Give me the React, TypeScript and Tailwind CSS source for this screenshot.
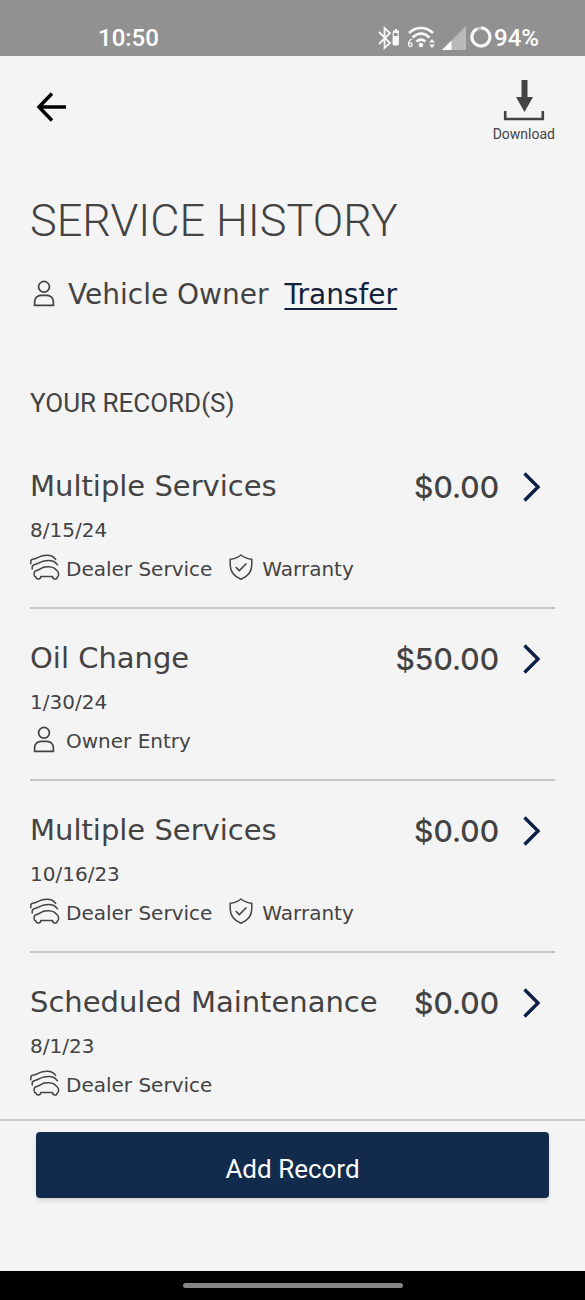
import type { ReactNode } from "react";

type Source = "dealer" | "owner" | "warranty";

interface ServiceRecord {
  title: string;
  date: string;
  price: string;
  tags: Source[];
}

const records: ServiceRecord[] = [
  { title: "Multiple Services", date: "8/15/24", price: "$0.00", tags: ["dealer", "warranty"] },
  { title: "Oil Change", date: "1/30/24", price: "$50.00", tags: ["owner"] },
  { title: "Multiple Services", date: "10/16/23", price: "$0.00", tags: ["dealer", "warranty"] },
  { title: "Scheduled Maintenance", date: "8/1/23", price: "$0.00", tags: ["dealer"] },
];

function PersonIcon() {
  return (
    <svg className="h-[30px] w-[30px] shrink-0" viewBox="0 0 30 30" fill="none" stroke="currentColor" strokeWidth="1.7" aria-hidden="true">
      <circle cx="14" cy="6.8" r="5.4" />
      <path d="M4.6 25.4V22C4.6 18 7.5 15.4 11 15.4H17C20.5 15.4 23.4 18 23.4 22V25.4Z" />
    </svg>
  );
}

function CarsIcon() {
  return (
    <svg className="h-[30px] w-[30px] shrink-0" viewBox="0 0 30 30" fill="none" stroke="currentColor" strokeWidth="1.5" strokeLinecap="round" strokeLinejoin="round" aria-hidden="true">
      <path d="M.8 9.7V7.4C.8 5.9 2 5.4 3.6 5.1C7.5 4.5 8.6 2.6 12.5 1.8C16 1.2 20 1.3 22 2.2C23.8 3 24.8 4 25.6 5.4" />
      <path d="M2.2 15V13C2.2 11.4 3.4 10.8 4.9 10.5C8.9 9.8 10.2 7.7 14 7C17.5 6.3 21.5 6.4 23.8 7.5C25.6 8.4 26.5 9.5 27.4 10.8" />
      <path d="M6.1 23.2C4.6 22.8 4.1 21.9 4.1 20.5V19.2C4.1 17.6 5.2 16.8 6.7 16.5C10.3 15.8 11.3 13.8 14.5 13.1C18 12.4 22 12.6 24.2 14.1C25.7 15.2 26.2 16 27.3 17C29 18.6 28.9 21.3 27.9 22.6L27.2 23.1C27.2 25.7 22.8 25.7 22.5 22.6H10.8C10.5 25.7 6.3 25.7 6.1 23.2Z" />
    </svg>
  );
}

function ShieldIcon() {
  return (
    <svg className="h-[30px] w-[30px] shrink-0" viewBox="0 0 30 30" fill="none" stroke="currentColor" strokeWidth="1.5" strokeLinejoin="round" aria-hidden="true">
      <path d="M15 1C12 3.5 8 5 4.2 5.2V11C4.2 18 9 22.7 15 25.3C21 22.7 25.8 18 25.8 11V5.2C22 5 18 3.5 15 1Z" />
      <path d="M9.7 13L13.3 16.6L20.4 9.5" />
    </svg>
  );
}

const tagInfo: Record<Source, { label: string; icon: ReactNode }> = {
  dealer: { label: "Dealer Service", icon: <CarsIcon /> },
  owner: { label: "Owner Entry", icon: <PersonIcon /> },
  warranty: { label: "Warranty", icon: <ShieldIcon /> },
};

function StatusBar() {
  return (
    <div className="flex h-14 items-center justify-between bg-[#919191] pt-5 pr-[46px] pl-[98px] font-['Roboto',sans-serif] text-2xl font-medium text-white">
      <span>10:50</span>
      <div className="flex items-center">
        <svg className="h-7 w-[93px]" viewBox="0 0 93 28" fill="none" stroke="#f8f8f8" aria-hidden="true">
          <path d="M2 8L13 19L7.5 24V4L13 9L2 20" strokeWidth="1.8" />
          <path d="M16 9V6.5H18V5H20V6.5H22V9Z" fill="#f8f8f8" stroke="none" />
          <rect x="16.2" y="8" width="5" height="13" rx="1" strokeWidth="1.2" />
          <rect x="16" y="12" width="5.5" height="9" fill="#f8f8f8" stroke="none" />
          <path d="M32 9C39 2.2 49 2.2 56 9M35.5 13.5C41 8.5 47 8.5 52.5 13.5M39.5 17.5C42.5 15 45.5 15 48.5 17.5" strokeWidth="2.5" />
          <circle cx="44" cy="21" r="2.3" fill="#f8f8f8" stroke="none" />
          <path d="M35 15C32 16 31.5 18 31.5 20.5" strokeWidth="1.3" />
          <circle cx="33.3" cy="20.7" r="1.8" strokeWidth="1.3" />
          <path d="M52 18.5L55 15L58 18.5ZM52 20.5L55 24L58 20.5Z" fill="#f8f8f8" stroke="none" />
          <path d="M65 26L89 2V26Z" fill="#bababa" stroke="none" />
          <path d="M65 26L74.5 16.5V26Z" fill="#fff" stroke="none" />
        </svg>
        <svg className="h-6 w-6" viewBox="0 0 24 24" fill="none" strokeWidth="3" aria-hidden="true">
          <circle cx="11" cy="11" r="9" stroke="#c2c2c2" />
          <path d="M11 2A9 9 0 1 1 7.2 2.8" stroke="#f8f8f8" />
        </svg>
        <span>94%</span>
      </div>
    </div>
  );
}

function RecordRow({ record }: { record: ServiceRecord }) {
  return (
    <li className="border-b-2 border-[#c6c6c6] pt-[30px] pb-[22px] last:border-b-0 last:pb-4">
      <a href="#record" className="block">
        <div className="flex h-10 items-center justify-between">
          <h3 className="text-[29px] whitespace-nowrap">{record.title}</h3>
          <div className="flex items-center gap-[22px] pr-[14px]">
            <span className="font-['Inter',sans-serif] text-[30px] leading-8 font-medium">{record.price}</span>
            <svg className="h-8 w-5" viewBox="0 0 20 32" fill="none" stroke="#0c1f45" strokeWidth="3.4" aria-hidden="true">
              <path d="M3.5 2.5L17 16L3.5 29.5" />
            </svg>
          </div>
        </div>
        <p className="text-[20px] leading-[46px]">{record.date}</p>
        <div className="flex h-8 items-center gap-[14px]">
          {record.tags.map((tag) => (
            <span key={tag} className="flex items-center gap-[6px] text-[20px]">
              {tagInfo[tag].icon}
              {tagInfo[tag].label}
            </span>
          ))}
        </div>
      </a>
    </li>
  );
}

export default function App() {
  return (
    <div className="flex min-h-screen flex-col bg-[#f4f4f4] font-['DejaVu_Sans',sans-serif] text-[#434343]">
      <StatusBar />
      <header className="flex items-start justify-between pt-6 pr-[30px] pl-9">
        <button type="button" aria-label="Back" className="mt-3 text-black">
          <svg className="h-[30px] w-[31px]" viewBox="0 0 31 30" fill="none" stroke="currentColor" strokeWidth="3.5" aria-hidden="true">
            <path d="M16 1.5L3 15L16 28.5M3 15H30" />
          </svg>
        </button>
        <button type="button" className="flex flex-col items-center font-['Roboto',sans-serif] text-sm leading-[26px]">
          <svg className="h-[41px] w-[42px]" viewBox="0 0 42 41" fill="none" aria-hidden="true">
            <path d="M18.5 0H24.5V17H30L21.5 32L13 17H18.5Z" fill="#434343" />
            <path d="M2.2 31V39H39.8V31" stroke="#434343" strokeWidth="2.6" />
          </svg>
          Download
        </button>
      </header>
      <main className="flex-1 px-[30px]">
        <h1 className="mt-11 font-['Roboto',sans-serif] text-[45px] leading-[60px] font-light">SERVICE HISTORY</h1>
        <div className="mt-6 flex items-center gap-2 text-[28px] leading-10">
          <PersonIcon />
          <span>Vehicle Owner</span>
          <a href="#transfer" className="ml-2 text-[#14213d] underline decoration-2 underline-offset-4">Transfer</a>
        </div>
        <h2 className="mt-[68px] font-['Roboto',sans-serif] text-[26px] leading-10">YOUR RECORD(S)</h2>
        <ul className="mt-[14px]">
          {records.map((record) => (
            <RecordRow key={record.date} record={record} />
          ))}
        </ul>
      </main>
      <footer className="border-t-2 border-[#c9c9c9] px-9 pt-[11px] pb-[73px]">
        <button type="button" className="h-[66px] w-full rounded bg-[#122b4d] pt-2 font-['Roboto',sans-serif] text-[26px] text-white shadow-md">
          Add Record
        </button>
      </footer>
      <div className="flex h-[29px] items-center justify-center bg-black">
        <div className="h-[5px] w-[220px] rounded-full bg-[#858585]" />
      </div>
    </div>
  );
}
